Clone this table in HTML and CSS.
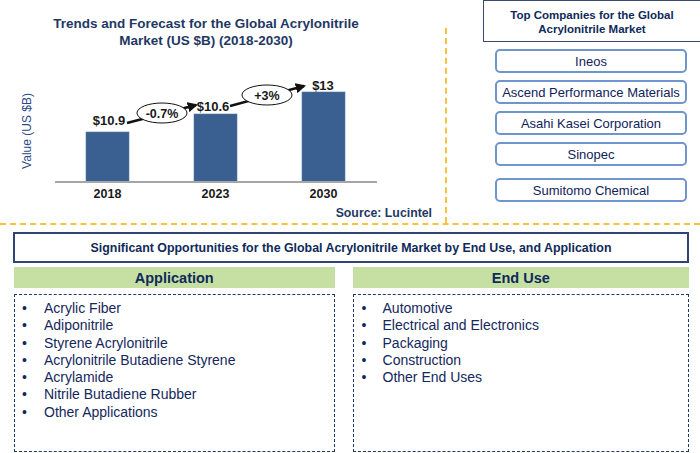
FILE: index.html
```html
<!DOCTYPE html>
<html lang="en">
<head>
<meta charset="utf-8">
<title>Global Acrylonitrile Market</title>
<link rel="stylesheet" href="styles.css">
</head>
<body>
<div class="page">
  <div class="top">
    <div class="chart">
      <h1 class="chart-title">Trends and Forecast for the Global Acrylonitrile<br>Market (US $B) (2018-2030)</h1>
      <svg class="plot" width="446" height="156" viewBox="0 49 446 156">
        <defs>
          <marker id="head" viewBox="0 0 10 10" refX="8" refY="5" markerWidth="4" markerHeight="4" orient="auto">
            <path d="M0,0 L10,5 L0,10 z" class="arrow-head"/>
          </marker>
        </defs>
        <text class="axis-title" transform="translate(31,131) rotate(-90)" text-anchor="middle">Value (US $B)</text>
        <rect class="bar" x="86" y="132" width="43" height="50"/>
        <rect class="bar" x="194" y="114" width="43" height="68"/>
        <rect class="bar" x="302" y="92" width="43" height="90"/>
        <line class="axis" x1="55" y1="182" x2="377" y2="182"/>
        <text class="year" x="107.5" y="198" text-anchor="middle">2018</text>
        <text class="year" x="215.5" y="198" text-anchor="middle">2023</text>
        <text class="year" x="323.5" y="198" text-anchor="middle">2030</text>
        <text class="value" x="109" y="125" text-anchor="middle">$10.9</text>
        <text class="value" x="213" y="111" text-anchor="middle">$10.6</text>
        <text class="value" x="323" y="90" text-anchor="middle">$13</text>
        <line class="arrow" x1="127" y1="123" x2="196" y2="105" marker-end="url(#head)"/>
        <line class="arrow" x1="230" y1="106" x2="304" y2="86" marker-end="url(#head)"/>
        <ellipse class="bubble" cx="162" cy="113" rx="25" ry="10"/>
        <text class="rate" x="162" y="117.5" text-anchor="middle">-0.7%</text>
        <ellipse class="bubble" cx="267" cy="95" rx="25" ry="10"/>
        <text class="rate" x="267" y="99.5" text-anchor="middle">+3%</text>
      </svg>
      <div class="source">Source: Lucintel</div>
    </div>
    <div class="vdivider"></div>
    <div class="companies">
      <div class="companies-head">Top Companies for the Global<br>Acrylonitrile Market</div>
      <ul class="company-list">
        <li class="company">Ineos</li>
        <li class="company">Ascend Performance Materials</li>
        <li class="company">Asahi Kasei Corporation</li>
        <li class="company">Sinopec</li>
        <li class="company company-last">Sumitomo Chemical</li>
      </ul>
    </div>
  </div>
  <div class="bottom">
    <div class="opps-title">Significant Opportunities for the Global Acrylonitrile Market by End Use, and Application</div>
    <div class="columns">
      <div class="col col-left">
        <div class="col-head">Application</div>
        <ul class="items">
          <li>Acrylic Fiber</li>
          <li>Adiponitrile</li>
          <li>Styrene Acrylonitrile</li>
          <li>Acrylonitrile Butadiene Styrene</li>
          <li>Acrylamide</li>
          <li>Nitrile Butadiene Rubber</li>
          <li>Other Applications</li>
        </ul>
      </div>
      <div class="col col-right">
        <div class="col-head">End Use</div>
        <ul class="items">
          <li>Automotive</li>
          <li>Electrical and Electronics</li>
          <li>Packaging</li>
          <li>Construction</li>
          <li>Other End Uses</li>
        </ul>
      </div>
    </div>
  </div>
</div>
</body>
</html>
```

FILE: styles.css
```css
* { box-sizing: border-box; }
html, body { margin: 0; padding: 0; background: #ffffff; }
body { font-family: "Liberation Sans", Arial, sans-serif; color: #1a2b5e; }

.page { width: 700px; height: 453px; overflow: hidden; }

.top {
  display: flex;
  height: 225px;
  border-bottom: 2px dashed #f7c23c;
}

.chart { width: 445px; display: flex; flex-direction: column; }
.chart-title {
  margin: 0;
  padding-top: 15px;
  width: 412px;
  text-align: center;
  font-size: 13.5px;
  line-height: 17px;
  font-weight: bold;
  color: #1f3864;
}
.plot { display: block; }
.axis-title { font-family: "Liberation Sans", Arial, sans-serif; font-size: 12px; fill: #2b4a8a; }
.bar { fill: #3a6092; stroke: #5679a6; stroke-width: 0.6; }
.axis { stroke: #a6a6a6; stroke-width: 2; }
.year { font-family: "Liberation Sans", Arial, sans-serif; font-size: 12.5px; font-weight: bold; fill: #1a1a1a; }
.value { font-family: "Liberation Sans", Arial, sans-serif; font-size: 13px; font-weight: bold; fill: #1a1a1a; }
.rate { font-family: "Liberation Sans", Arial, sans-serif; font-size: 12.5px; font-weight: bold; fill: #1a1a1a; }
.arrow { stroke: #111111; stroke-width: 2.6; }
.arrow-head { fill: #111111; }
.bubble { fill: #ffffff; stroke: #111111; stroke-width: 1; }
.source {
  text-align: right;
  padding-right: 13px;
  font-size: 12.3px;
  line-height: 16px;
  font-weight: bold;
  color: #1f3864;
}

.vdivider {
  width: 2px;
  margin-top: 28px;
  border-left: 2px dashed #f7c23c;
}

.companies { flex: 1; display: flex; flex-direction: column; }
.companies-head {
  margin-left: 36px;
  width: 218px;
  height: 42px;
  border: 1.5px solid #3a4a6e;
  padding-top: 3px;
  display: flex;
  align-items: center;
  justify-content: center;
  text-align: center;
  font-size: 11.5px;
  line-height: 13.5px;
  font-weight: bold;
  color: #0f2a5a;
}
.company-list {
  list-style: none;
  margin: 7px 0 0 48px;
  padding: 0;
  width: 192px;
  display: flex;
  flex-direction: column;
  gap: 7px;
}
.company {
  height: 24px;
  border: 2px solid #7094cc;
  border-radius: 5px;
  display: flex;
  align-items: center;
  justify-content: center;
  font-size: 13px;
  color: #10225a;
}
.company-last { margin-top: 5px; }

.bottom { padding: 7px 11px 0 13px; }
.opps-title {
  height: 31px;
  border: 2px solid #2f4470;
  display: flex;
  align-items: center;
  justify-content: center;
  font-size: 12.4px;
  font-weight: bold;
  color: #0f2a5a;
}
.columns {
  display: flex;
  gap: 18px;
  margin-top: 4px;
  padding-left: 1px;
}
.col-left { width: 321px; }
.col-right { width: 337px; }
.col-head {
  height: 21px;
  background: #c6e0a4;
  display: flex;
  align-items: center;
  justify-content: center;
  font-size: 14.5px;
  font-weight: bold;
  color: #0f2a5a;
}
.items {
  list-style: none;
  margin: 6px 0 0 0;
  height: 158px;
  border: 1px dashed #1f3a6e;
  padding: 5px 0 0 7px;
  font-size: 14px;
  line-height: 17.3px;
  color: #14285c;
}
.items li { display: flex; }
.items li::before {
  content: "\2022";
  width: 22px;
  flex: none;
  color: #14285c;
}
.col-right .items { padding-left: 8px; }
.col-right .items li::before { width: 21px; }
```
